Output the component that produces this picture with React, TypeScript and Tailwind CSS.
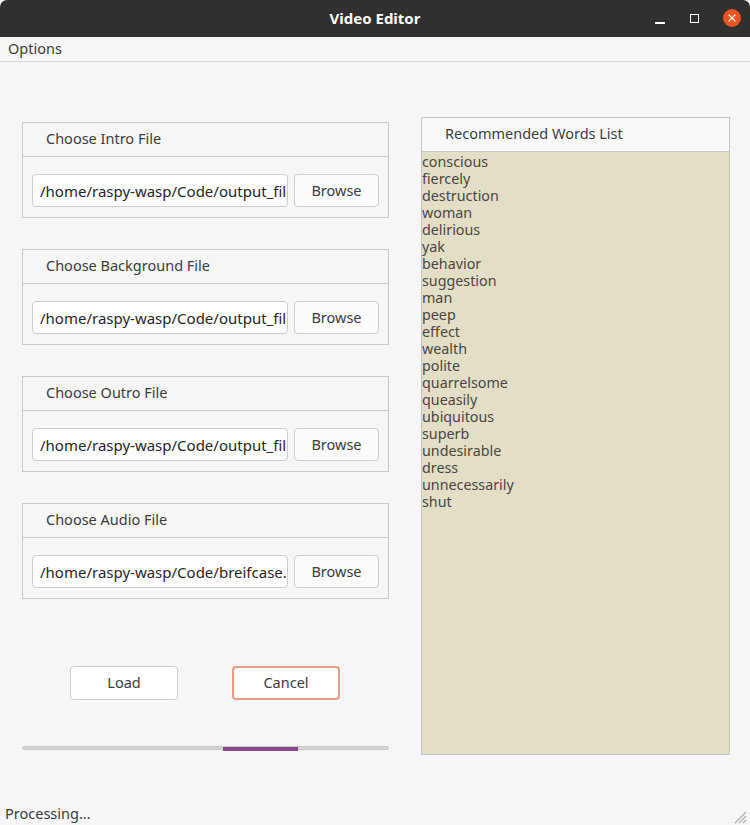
import { X } from 'lucide-react'

const words = [
  'conscious', 'fiercely', 'destruction', 'woman', 'delirious', 'yak', 'behavior',
  'suggestion', 'man', 'peep', 'effect', 'wealth', 'polite', 'quarrelsome',
  'queasily', 'ubiquitous', 'superb', 'undesirable', 'dress', 'unnecessarily', 'shut',
]

const files = [
  { title: 'Choose Intro File', path: '/home/raspy-wasp/Code/output_file.mp4' },
  { title: 'Choose Background File', path: '/home/raspy-wasp/Code/output_file.mp4' },
  { title: 'Choose Outro File', path: '/home/raspy-wasp/Code/output_file.mp4' },
  { title: 'Choose Audio File', path: '/home/raspy-wasp/Code/breifcase.mp3' },
]

function FileGroup({ title, path }: { title: string; path: string }) {
  return (
    <div className="border border-[#c8c8c8] h-[96px] flex flex-col">
      <div className="h-[34px] border-b border-[#c8c8c8] pl-[23px] pb-[2px] flex items-center text-[14.5px] text-[#3c3c3c]">
        {title}
      </div>
      <div className="flex gap-[6px] pl-[9px] pt-[17px]">
        <input
          readOnly
          value={path}
          className="w-[256px] h-[33px] bg-white border border-[#cdcdcd] rounded-[4px] pl-[7px] text-[15px] text-[#262626] outline-none"
        />
        <button className="w-[85px] h-[33px] bg-[#fbfbfb] border border-[#cdcdcd] rounded-[4px] text-[14.5px] text-[#3c3c3c]">
          Browse
        </button>
      </div>
    </div>
  )
}

export default function App() {
  return (
    <div className="w-[750px] h-[825px] bg-[#f6f6f6] flex flex-col overflow-hidden" style={{ fontFamily: '"Noto Sans", "Open Sans", sans-serif' }}>
      <div className="h-[37px] bg-[#303030] rounded-t-[7px] flex items-center relative shrink-0">
        <div className="flex-1 text-center text-white font-bold text-[15px]">Video Editor</div>
        <div className="absolute right-[9px] top-[9px] flex items-center">
          <div className="w-[10px] h-[2px] bg-white mt-[10px] mr-[25px]" />
          <div className="w-[9px] h-[9px] border-[1.5px] border-white mr-[24px]" />
          <div className="w-[18px] h-[18px] rounded-full bg-[#e95420] flex items-center justify-center">
            <X size={12} color="white" strokeWidth={2.2} />
          </div>
        </div>
      </div>
      <div className="h-[25px] border-b border-[#dadada] pl-[8px] flex items-center text-[14.5px] text-[#3c3c3c] shrink-0">
        Options
      </div>
      <div className="flex flex-1">
        <div className="w-[367px] ml-[22px] pt-[60px] flex flex-col">
          <div className="flex flex-col gap-[31px]">
            {files.map((f) => (
              <FileGroup key={f.title} title={f.title} path={f.path} />
            ))}
          </div>
          <div className="flex gap-[54px] pl-[48px] mt-[67px]">
            <button className="w-[108px] h-[34px] bg-white border border-[#cdcdcd] rounded-[4px] text-[14.5px] text-[#3c3c3c]">
              Load
            </button>
            <button className="w-[108px] h-[34px] bg-white border-2 border-[#eb9d82] rounded-[4px] text-[14.5px] text-[#3c3c3c]">
              Cancel
            </button>
          </div>
          <div className="mt-[46px] h-[4px] rounded-full bg-[#d5d5d5] border-[0.5px] border-[#cacaca] relative">
            <div className="absolute left-[200px] top-[-0.5px] w-[75px] h-[4px] bg-[#8b4887]" />
          </div>
        </div>
        <div className="ml-[32px] w-[309px] mt-[55px] h-[638px] border border-[#c4c4c4] flex flex-col">
          <div className="h-[34px] shrink-0 bg-[#f9f9f9] border-b border-[#c4c4c4] pl-[23px] pb-[2px] flex items-center text-[14.5px] text-[#3c3c3c]">
            Recommended Words List
          </div>
          <div className="flex-1 bg-[#e3dfc7] pt-[1px] text-[14.3px] leading-[17px] text-[#4a4540]">
            {words.map((w) => (
              <div key={w}>{w}</div>
            ))}
          </div>
        </div>
      </div>
      <div className="h-[22px] shrink-0 flex items-center justify-between pl-[5px] pr-[3px] text-[14.5px] text-[#3c3c3c]">
        <span>Processing...</span>
        <svg width="16" height="16" viewBox="0 0 16 16" className="mt-[4px]">
          <path d="M15 4 L4 15 M15 8 L8 15 M15 12 L12 15" stroke="#b0b0b0" strokeWidth="1.3" />
        </svg>
      </div>
    </div>
  )
}
